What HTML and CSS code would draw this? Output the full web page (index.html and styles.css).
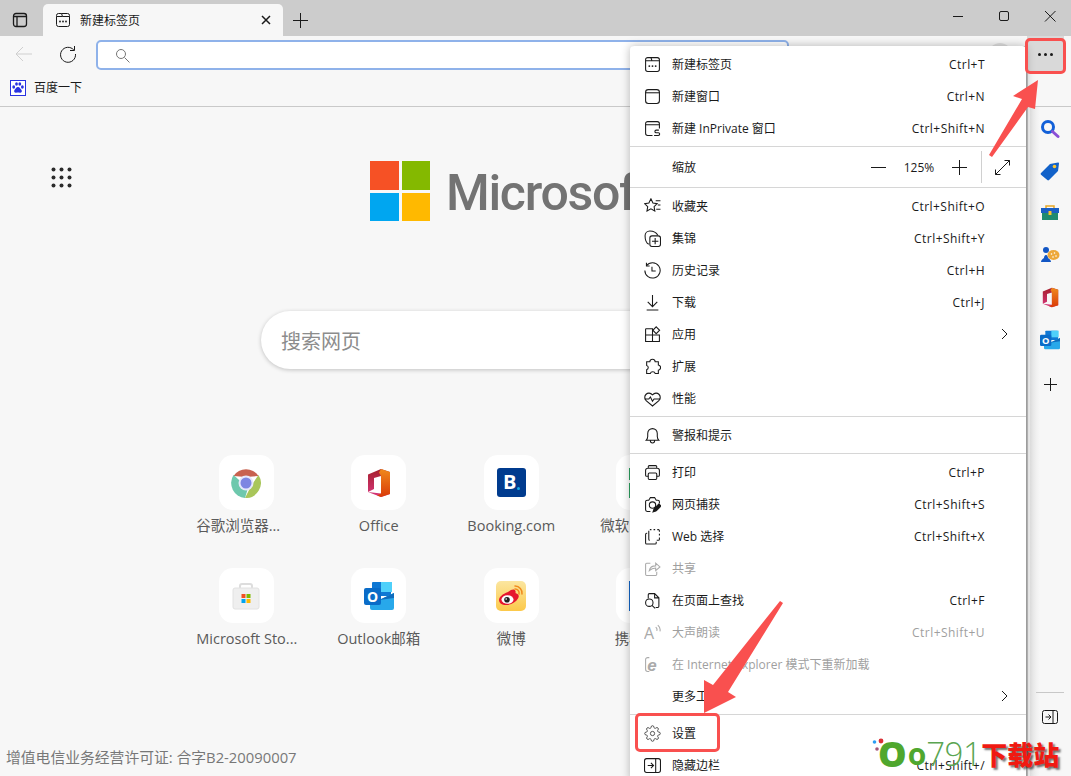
FILE: index.html
```html
<!DOCTYPE html>
<html lang="zh-CN">
<head>
<meta charset="utf-8">
<title>新建标签页</title>
<link rel="stylesheet" href="styles.css">
</head>
<body>
<svg class="defs" width="0" height="0" aria-hidden="true">
  <defs>
    <linearGradient id="offL" x1="0" y1="0" x2="0" y2="1"><stop offset="0" stop-color="#a51f2c"/><stop offset="1" stop-color="#d8387e"/></linearGradient>
    <linearGradient id="offR" x1="0" y1="0" x2="0" y2="1"><stop offset="0" stop-color="#f08a1d"/><stop offset="1" stop-color="#d93a08"/></linearGradient>
    <linearGradient id="wb" x1="0" y1="0" x2="0" y2="1"><stop offset="0" stop-color="#fbe6a0"/><stop offset="1" stop-color="#fcc94a"/></linearGradient>
    <symbol id="office" viewBox="0 0 24 30">
      <path d="M1 6.5 14 1l9 3v22l-9 3L1 24l13 1.5V8L7 10v11l-6 3z" fill="url(#offL)"/>
      <path d="M14 1l9 3v22l-9 3-4-1.5 4-2V8l-2-3.5z" fill="url(#offR)"/>
    </symbol>
    <symbol id="outlook" viewBox="0 0 30 30">
      <rect x="8" y="1" width="19" height="14" rx="1" fill="#0f78d4"/>
      <rect x="17" y="1" width="11" height="10" fill="#4fd0fa"/>
      <path d="M6 13l9 6 15-7v15a2 2 0 0 1-2 2H8a2 2 0 0 1-2-2z" fill="#28a8ea"/>
      <path d="M15 19l15-7v5z" fill="#0f6cbd"/>
      <rect x="0" y="7" width="17" height="17" rx="2" fill="#0a6cc8"/>
      <text x="8.5" y="20.5" class="svg-o">O</text>
    </symbol>
  </defs>
</svg>

<div class="browser">
  <header class="tabstrip">
    <button class="strip-btn switcher" aria-label="标签页操作">
      <svg width="16" height="16" viewBox="0 0 16 16" class="ic heavy"><rect x="1.500" y="1.500" width="13" height="13" rx="2.500"/><path d="M1.500 4.500h13M5 4.500v10"/></svg>
    </button>
    <div class="tab">
      <svg width="16" height="16" viewBox="0 0 16 16" class="ic"><path d="M1.500 4.500V3.500a2 2 0 0 1 2-2h3l1 3zM7.500 4.500h7M14.500 4.500V3.500a2 2 0 0 0-2-2h-6M1.500 4.500v8a2 2 0 0 0 2 2h9a2 2 0 0 0 2-2v-8"/><circle cx="5" cy="9.500" r=".9" class="dot"/><circle cx="8" cy="9.500" r=".9" class="dot"/><circle cx="11" cy="9.500" r=".9" class="dot"/></svg>
      <span class="tab-title">新建标签页</span>
      <svg width="10" height="10" viewBox="0 0 10 10" class="ic tab-close"><path d="M1 1l8 8M9 1l-8 8" stroke-width="1.500"/></svg>
    </div>
    <button class="strip-btn new-tab" aria-label="新建标签页">
      <svg width="15" height="15" viewBox="0 0 15 15" class="ic"><path d="M7.500 0v15M0 7.500h15"/></svg>
    </button>
    <div class="window-controls">
      <svg width="46" height="12" viewBox="0 0 46 12" class="ic"><path d="M20 6.500h10"/></svg>
      <svg width="46" height="12" viewBox="0 0 46 12" class="ic"><rect x="20.500" y="1.500" width="9" height="9" rx="1.500"/></svg>
      <svg width="46" height="12" viewBox="0 0 46 12" class="ic"><path d="M20 1l10.500 10.500M30.500 1L20 11.500"/></svg>
    </div>
  </header>

  <div class="toolbar">
    <svg width="20" height="16" viewBox="0 0 20 16" class="back"><path d="M18 8H2M9 1L2 8l7 7"/></svg>
    <svg width="18" height="18" viewBox="0 0 18 18" class="ic reload"><path d="M14.800 5A7.500 7.500 0 1 0 16.500 9"/><path d="M15.500 1v4.500H11"/></svg>
    <div class="address">
      <svg width="15" height="15" viewBox="0 0 15 15" class="addr-search"><circle cx="6" cy="6" r="4.500"/><path d="M9.500 9.500l5 5"/></svg>
    </div>
    <span class="avatar"></span>
    <button class="more-btn" aria-label="设置及其他"><i></i><i></i><i></i></button>
  </div>

  <div class="favbar">
    <svg width="16" height="16" viewBox="0 0 16 16" class="paw"><rect x=".5" y=".5" width="15" height="15" fill="#fff" stroke="#2932e1"/><ellipse cx="3.700" cy="7" rx="1.400" ry="1.800" fill="#2932e1"/><ellipse cx="6.500" cy="4" rx="1.400" ry="1.800" fill="#2932e1"/><ellipse cx="9.800" cy="4" rx="1.400" ry="1.800" fill="#2932e1"/><ellipse cx="12.400" cy="7" rx="1.400" ry="1.800" fill="#2932e1"/><path d="M8 7c-2 0-2.300 2-3.500 3-1 1.200 0 3 1.500 2.800.8-.1 1.400-.3 2-.3s1.200.2 2 .3c1.500.2 2.500-1.600 1.500-2.800C10.300 9 10 7 8 7z" fill="#2932e1"/></svg>
    <span class="fav-text">百度一下</span>
  </div>

  <div class="workspace">
    <main class="newtab">
      <svg width="21" height="21" viewBox="0 0 21 21" class="apps"><g fill="#2b2b2b"><circle cx="2.500" cy="2.500" r="2"/><circle cx="10.500" cy="2.500" r="2"/><circle cx="18.500" cy="2.500" r="2"/><circle cx="2.500" cy="10.500" r="2"/><circle cx="10.500" cy="10.500" r="2"/><circle cx="18.500" cy="10.500" r="2"/><circle cx="2.500" cy="18.500" r="2"/><circle cx="10.500" cy="18.500" r="2"/><circle cx="18.500" cy="18.500" r="2"/></g></svg>

      <div class="brand">
        <div class="ms-logo"><i class="red"></i><i class="green"></i><i class="blue"></i><i class="yellow"></i></div>
        <span class="ms-name">Microsoft</span>
      </div>

      <div class="searchbox">搜索网页</div>

      <div class="tiles">
        <a class="tile">
          <span class="tile-icon"><svg width="30" height="30" viewBox="0 0 30 30"><path d="M2.500 8a15 15 0 0 1 25 0L15 9z" fill="#c8624f"/><path d="M27.500 7A15 15 0 0 1 14 30l6-12z" fill="#a9c65a"/><path d="M2.500 7A15 15 0 0 0 14 30l3-10z" fill="#6ec8ad"/><circle cx="15" cy="15" r="7.500" fill="#e6e8fb"/><circle cx="15" cy="15" r="5.500" fill="#7d86e2"/></svg></span>
          <span class="tile-label clip">谷歌浏览器...</span>
        </a>
        <a class="tile">
          <span class="tile-icon"><svg width="24" height="30"><use href="#office"/></svg></span>
          <span class="tile-label">Office</span>
        </a>
        <a class="tile">
          <span class="tile-icon"><span class="booking">B<i></i></span></span>
          <span class="tile-label">Booking.com</span>
        </a>
        <a class="tile">
          <span class="tile-icon"><span class="ms-tile"></span></span>
          <span class="tile-label">微软中国官网</span>
        </a>
        <a class="tile">
          <span class="tile-icon"><svg width="28" height="28" viewBox="0 0 28 28"><path d="M8 8V4a2 2 0 0 1 2-2h8a2 2 0 0 1 2 2v4" fill="none" stroke="#ddd" stroke-width="2"/><rect x="1" y="6" width="26" height="21" rx="2" fill="#efefef" stroke="#e2e2e2"/><rect x="9.500" y="12" width="4" height="4" fill="#f25022"/><rect x="14.500" y="12" width="4" height="4" fill="#7fba00"/><rect x="9.500" y="17" width="4" height="4" fill="#00a4ef"/><rect x="14.500" y="17" width="4" height="4" fill="#ffb900"/></svg></span>
          <span class="tile-label clip">Microsoft Sto...</span>
        </a>
        <a class="tile">
          <span class="tile-icon"><svg width="30" height="30"><use href="#outlook"/></svg></span>
          <span class="tile-label">Outlook邮箱</span>
        </a>
        <a class="tile">
          <span class="tile-icon"><svg width="30" height="30" viewBox="0 0 30 30"><rect width="30" height="30" rx="5" fill="url(#wb)"/><path d="M12 11c4-3.500 7-3 7.500-1 .3 1-.2 2 .3 2.200 3 .7 3.700 3 2.200 5.300C20 21 15.500 24 10 24c-4 0-7-2-7-5 0-3 3.500-6 9-8z" fill="#e6162d"/><ellipse cx="11.500" cy="18.500" rx="6" ry="4.300" fill="#fff"/><circle cx="11" cy="18.700" r="2.800" fill="#222"/><circle cx="10.200" cy="18" r=".8" fill="#fff"/><path d="M19 5a7 7 0 0 1 7 8M19 8a4 4 0 0 1 4 5" fill="none" stroke="#f08a1d" stroke-width="1.500" stroke-linecap="round"/></svg></span>
          <span class="tile-label">微博</span>
        </a>
        <a class="tile">
          <span class="tile-icon"><span class="ctrip"></span></span>
          <span class="tile-label">携程旅行</span>
        </a>
      </div>

      <footer class="licence">增值电信业务经营许可证: 合字B2-20090007</footer>
    </main>

    <aside class="sidebar">
      <svg width="20" height="20" viewBox="0 0 20 20" class="side-icon first"><circle cx="8" cy="8" r="5.500" fill="none" stroke="#1260d8" stroke-width="3"/><path d="M12.500 12.500l5.500 5" stroke="#8a4fd6" stroke-width="3" stroke-linecap="round"/></svg>
      <svg width="20" height="20" viewBox="0 0 20 20" class="side-icon"><path d="M1 12l9-9 8-1.500c.7 0 1 .4 1 1L18 10l-9 9c-.5.500-1.200.500-1.700 0L1 13.700c-.5-.5-.5-1.200 0-1.700z" fill="#1262c9"/><circle cx="14.500" cy="5.500" r="1.800" fill="#fbc42f"/></svg>
      <svg width="20" height="20" viewBox="0 0 20 20" class="side-icon"><path d="M6 5V3h8v2" fill="none" stroke="#e9a825" stroke-width="1.500"/><rect x="1" y="5" width="18" height="5" fill="#1a5fc4"/><rect x="2" y="10" width="16" height="7" fill="#1f8a70"/><rect x="8.500" y="8" width="3" height="4" rx=".5" fill="#fbc42f"/></svg>
      <svg width="20" height="20" viewBox="0 0 20 20" class="side-icon"><circle cx="6" cy="5" r="3" fill="#1256c4"/><path d="M1 17c0-2 1.500-3 3-4 0-1 .5-3 2-3s2 2 2 3c1.500 1 3 2 3 4z" fill="#1256c4"/><ellipse cx="13.500" cy="10" rx="6" ry="5" fill="#eda83a"/><circle cx="11.500" cy="9" r=".8" fill="#fff"/><circle cx="14.500" cy="8" r=".8" fill="#fff"/><circle cx="16" cy="11" r=".8" fill="#fff"/><circle cx="13" cy="12" r=".8" fill="#fff"/></svg>
      <svg width="17" height="21" class="side-icon"><use href="#office"/></svg>
      <svg width="20" height="20" class="side-icon"><use href="#outlook"/></svg>
      <svg width="13" height="13" viewBox="0 0 13 13" class="ic side-plus"><path d="M6.500 0v13M0 6.500h13"/></svg>
      <hr class="side-rule">
      <svg width="16" height="14" viewBox="0 0 16 14" class="ic side-hide"><rect x=".5" y=".5" width="15" height="13" rx="2"/><path d="M11 .5v13M3.500 7h5M6.500 4.500L9 7l-2.500 2.500"/></svg>
    </aside>
  </div>

  <nav class="menu">
    <div class="row"><svg class="ic ri" viewBox="0 0 16 16"><path d="M1.500 4.500V3.500a2 2 0 0 1 2-2h3l1 3zM7.500 4.500h7M14.500 4.500V3.500a2 2 0 0 0-2-2h-6M1.500 4.500v8a2 2 0 0 0 2 2h9a2 2 0 0 0 2-2v-8"/><circle cx="5" cy="9.500" r=".9" class="dot"/><circle cx="8" cy="9.500" r=".9" class="dot"/><circle cx="11" cy="9.500" r=".9" class="dot"/></svg><span class="lbl">新建标签页</span><span class="key">Ctrl+T</span></div>
    <div class="row"><svg class="ic ri" viewBox="0 0 16 16"><rect x="1.500" y="1.500" width="13" height="13" rx="2.500"/><path d="M1.500 4.500h13"/></svg><span class="lbl">新建窗口</span><span class="key">Ctrl+N</span></div>
    <div class="row"><svg class="ic ri" viewBox="0 0 16 16"><path d="M8 14.500H3.500a2 2 0 0 1-2-2v-9a2 2 0 0 1 2-2h9a2 2 0 0 1 2 2V8M1.500 4.500h13"/><path d="M14 9.500h-2.500a1.200 1.200 0 0 0 0 2.500h2a1.200 1.200 0 0 1 0 2.500H9.500"/></svg><span class="lbl">新建 InPrivate 窗口</span><span class="key">Ctrl+Shift+N</span></div>
    <hr>
    <div class="row zoom"><span class="lbl">缩放</span>
      <svg class="ic zi" width="15" height="15" viewBox="0 0 15 15"><path d="M0 7.500h15"/></svg>
      <span class="pct">125%</span>
      <svg class="ic zi" width="15" height="15" viewBox="0 0 15 15"><path d="M7.500 0v15M0 7.500h15"/></svg>
      <span class="zsep"></span>
      <svg class="ic zi" width="15" height="15" viewBox="0 0 15 15"><path d="M9.500.5h5v5M14.500.5l-14 14M.5 9.500v5h5"/></svg>
    </div>
    <hr>
    <div class="row"><svg class="ic ri" viewBox="0 0 16 16"><path d="M6.500 .8l1.900 3.900 4 .6-2.900 2.900.7 4-3.700-2-3.700 2 .7-4L.6 5.300l4-.6z"/><path d="M11 2.500h4.500M13 6.500h2.500M11.500 10.500h4"/></svg><span class="lbl">收藏夹</span><span class="key">Ctrl+Shift+O</span></div>
    <div class="row"><svg class="ic ri" viewBox="0 0 16 16"><path d="M4.500 13.500C2.500 12.500 1 9 1 5.500 1 3 3 1 5.500 1c2.500 0 6 1.200 7.500 4"/><rect x="5.500" y="5.500" width="10" height="10" rx="2"/><path d="M10.500 7.500v6M7.500 10.500h6"/></svg><span class="lbl">集锦</span><span class="key">Ctrl+Shift+Y</span></div>
    <div class="row"><svg class="ic ri" viewBox="0 0 16 16"><path d="M2.300 3.500A7.200 7.200 0 1 1 .8 8"/><path d="M2.300 .8v3h3M7.500 4.500v4h3.500"/></svg><span class="lbl">历史记录</span><span class="key">Ctrl+H</span></div>
    <div class="row"><svg class="ic ri" viewBox="0 0 16 16"><path d="M8 1v10.500M3.500 7.500L8 12l4.500-4.500M2.500 15h11"/></svg><span class="lbl">下载</span><span class="key">Ctrl+J</span></div>
    <div class="row arrowed"><svg class="ic ri" viewBox="0 0 16 16"><path d="M8 2.500H2a.5.5 0 0 0-.5.500v11.500h13V8.500H8zM1.500 8.500H8v6"/><path d="M11.500 .8l3.200 3.200-3.200 3.200L8.300 4z"/></svg><span class="lbl">应用</span><svg class="ic chev" width="7" height="12" viewBox="0 0 7 12"><path d="M1 1l5 5-5 5"/></svg></div>
    <div class="row"><svg class="ic ri" viewBox="0 0 16 16"><path d="M5.500 3.500c.3-3 4.700-3 5 0h3v3c2.800.3 2.800 4.700 0 5v3h-3c-.5-2-4-2-4.500 0H2.500v-3.500c2-.5 2-3.500 0-4v-3.500z"/></svg><span class="lbl">扩展</span></div>
    <div class="row"><svg class="ic ri" viewBox="0 0 16 16"><path d="M2 10C.5 8 .5 5.500 2 4s4-1.500 6 .5c2-2 4.500-2 6 -.5s1.500 4 0 6l-6 5z"/><path d="M.5 8.500h4l1.500-2 2 4 1.500-2h6"/></svg><span class="lbl">性能</span></div>
    <hr>
    <div class="row"><svg class="ic ri" viewBox="0 0 16 16"><path d="M2 12.500h12c-1-1-1.500-2-1.500-3.500V6a4.500 4.500 0 0 0-9 0v3c0 1.500-.5 2.500-1.500 3.500zM6 13a2 2 0 0 0 4 0"/></svg><span class="lbl">警报和提示</span></div>
    <hr>
    <div class="row"><svg class="ic ri" viewBox="0 0 16 16"><path d="M4 4V2.500a1 1 0 0 1 1-1h6a1 1 0 0 1 1 1V4M4 11.500H2.500a1 1 0 0 1-1-1V6a2 2 0 0 1 2-2h9a2 2 0 0 1 2 2v4.500a1 1 0 0 1-1 1H12"/><rect x="4" y="8.500" width="8" height="6" rx="1"/></svg><span class="lbl">打印</span><span class="key">Ctrl+P</span></div>
    <div class="row"><svg class="ic ri" viewBox="0 0 16 16"><path d="M6 14.500H3a1.500 1.500 0 0 1-1.500-1.500V5.500A1.500 1.500 0 0 1 3 4h1.500L6 1.500h4L11.500 4H13a1.500 1.500 0 0 1 1.500 1.500V7"/><circle cx="8" cy="8.500" r="3"/><path d="M8.500 15l1-3 4.500-4.500 2 2-4.500 4.500z" fill="#1a1a1a"/></svg><span class="lbl">网页捕获</span><span class="key">Ctrl+Shift+S</span></div>
    <div class="row"><svg class="ic ri" viewBox="0 0 16 16"><path d="M5.500 1.500h1.500M9 1.500h1.500M12.500 1.500h1a1.500 1.500 0 0 1 1 1v1M14.500 5.500V7M14.500 9v1.500a1 1 0 0 1-1 1H12M5.500 11.500a1 1 0 0 1-1-1V2.500"/><path d="M3 5H2.500a1 1 0 0 0-1 1v8a1 1 0 0 0 1 1h8a1 1 0 0 0 1-1v-1"/></svg><span class="lbl">Web 选择</span><span class="key">Ctrl+Shift+X</span></div>
    <div class="row off"><svg class="ic ri" viewBox="0 0 16 16"><path d="M6 3H2.500a1 1 0 0 0-1 1v9.500a1 1 0 0 0 1 1H11a1 1 0 0 0 1-1V11"/><path d="M5 10c.5-3 3-4.500 6-4.500V3l4 3.500-4 3.500V7.500c-2.500 0-4.500 1-6 2.500z"/></svg><span class="lbl">共享</span></div>
    <div class="row"><svg class="ic ri" viewBox="0 0 16 16"><path d="M4 6V2.500a1 1 0 0 1 1-1h5l4 4v8a1 1 0 0 1-1 1h-2M10 1.500v4h4"/><circle cx="5" cy="10" r="3.500"/><path d="M7.500 12.500l3 3"/></svg><span class="lbl">在页面上查找</span><span class="key">Ctrl+F</span></div>
    <div class="row off"><svg class="ri" viewBox="0 0 16 16"><text x="0" y="14" class="svg-a">A</text><path d="M11 3a3 3 0 0 1 1 3.500M13 1a6 6 0 0 1 2 6" fill="none" stroke="#aaa"/></svg><span class="lbl">大声朗读</span><span class="key">Ctrl+Shift+U</span></div>
    <div class="row off"><svg class="ri" viewBox="0 0 16 16"><path d="M5 1.500H3.500a2 2 0 0 0-2 2v9a2 2 0 0 0 2 2H5" fill="none" stroke="#aaa"/><text x="3" y="14" class="svg-e">e</text></svg><span class="lbl">在 Internet Explorer 模式下重新加载</span></div>
    <div class="row arrowed"><span class="ri"></span><span class="lbl">更多工具</span><svg class="ic chev" width="7" height="12" viewBox="0 0 7 12"><path d="M1 1l5 5-5 5"/></svg></div>
    <hr>
    <div class="row"><svg class="ic ri" viewBox="0 0 24 24" stroke-width="1.700"><circle cx="12" cy="12" r="3"/><path d="M19.400 15a1.650 1.650 0 0 0 .33 1.820l.06.06a2 2 0 0 1 0 2.830 2 2 0 0 1-2.830 0l-.06-.06a1.650 1.650 0 0 0-1.820-.33 1.650 1.650 0 0 0-1 1.510V21a2 2 0 0 1-2 2 2 2 0 0 1-2-2v-.09A1.650 1.650 0 0 0 9 19.400a1.650 1.650 0 0 0-1.820.33l-.06.06a2 2 0 0 1-2.830 0 2 2 0 0 1 0-2.830l.06-.06a1.650 1.650 0 0 0 .33-1.820 1.650 1.650 0 0 0-1.510-1H3a2 2 0 0 1-2-2 2 2 0 0 1 2-2h.09A1.650 1.650 0 0 0 4.600 9a1.650 1.650 0 0 0-.33-1.820l-.06-.06a2 2 0 0 1 0-2.830 2 2 0 0 1 2.830 0l.06.06a1.650 1.650 0 0 0 1.820.33H9a1.650 1.650 0 0 0 1-1.510V3a2 2 0 0 1 2-2 2 2 0 0 1 2 2v.09a1.650 1.650 0 0 0 1 1.510 1.650 1.650 0 0 0 1.820-.33l.06-.06a2 2 0 0 1 2.830 0 2 2 0 0 1 0 2.830l-.06.06a1.650 1.650 0 0 0-.33 1.820V9a1.650 1.650 0 0 0 1.510 1H21a2 2 0 0 1 2 2 2 2 0 0 1-2 2h-.09a1.650 1.650 0 0 0-1.510 1z"/></svg><span class="lbl">设置</span></div>
    <div class="row"><svg class="ic ri" viewBox="0 0 16 16"><rect x=".5" y="1.500" width="15" height="13" rx="2"/><path d="M11 1.500v13M3.500 8h5M6.500 5.500L9 8l-2.500 2.500"/></svg><span class="lbl">隐藏边栏</span><span class="key">Ctrl+Shift+/</span></div>
  </nav>

  <span class="mark-more"></span>
  <span class="mark-settings"></span>
  <svg class="arrows" width="1071" height="776" viewBox="0 0 1071 776">
    <path d="M1038 80 1013 96l9 3-33 56 3 2 36-50 7 2z" fill="#f9504f"/>
    <path d="M783 603l-3-2-67 84-9-5v33l32-16-8-5z" fill="#f9504f"/>
  </svg>

  <div class="watermark">
    <svg class="wm-dots" width="14" height="16" viewBox="0 0 14 16"><circle cx="2.500" cy="4" r="1.800" fill="#2a9df4"/><circle cx="9" cy="3" r="2.400" fill="#d93036"/><circle cx="5" cy="11" r="1.800" fill="#a4567a"/></svg>
    <span class="wm-o">O</span><span class="wm-o small">o</span><span class="wm-num">791</span><span class="wm-cn">下载站</span>
  </div>
</div>
</body>
</html>
```
FILE: styles.css
```css
* { box-sizing: border-box; }
html, body { margin: 0; height: 100%; overflow: hidden; }
body { font-family: "Open Sans", "Noto Sans CJK SC", sans-serif; font-size: 12px; color: #1a1a1a; background: #f7f7f7; }
button { border: 0; background: none; padding: 0; }
.defs { position: absolute; }
.ic { fill: none; stroke: #1a1a1a; stroke-width: 1; }
.ic.heavy { stroke-width: 1.300; }
.ic .dot { fill: #1a1a1a; stroke: none; }
.svg-o { font: 700 14px "Open Sans", sans-serif; fill: #fff; text-anchor: middle; }
.svg-a { font: 400 15px "Open Sans", sans-serif; fill: #aaa; }
.svg-e { font: italic 700 16px "Liberation Sans", sans-serif; fill: #aaa; }

.browser { position: relative; width: 1071px; height: 776px; overflow: hidden; display: flex; flex-direction: column; }

/* Tab strip */
.tabstrip { height: 36px; flex: none; background: #cccccc; display: flex; align-items: flex-end; }
.strip-btn { display: flex; align-items: center; justify-content: center; }
.switcher { width: 43px; height: 32px; padding-right: 4px; }
.tab { width: 240px; height: 32px; background: #f7f7f7; border-radius: 5px 5px 0 0; display: flex; align-items: center; padding: 0 12px; }
.tab-title { margin-left: 9px; flex: 1; font-size: 12px; color: #1a1a1a; }
.new-tab { width: 34px; height: 32px; }
.window-controls { margin-left: auto; align-self: flex-start; padding-top: 10px; display: flex; }
.window-controls svg { display: block; }

/* Toolbar */
.toolbar { height: 36px; flex: none; background: #f7f7f7; display: flex; align-items: center; padding: 0 7px 0 0; position: relative; }
.back { margin-left: 14px; fill: none; stroke: #cfcfcf; stroke-width: 1; }
.reload { margin-left: 25px; }
.address { width: 693px; height: 30px; margin-left: 19px; margin-top: 2px; background: #fff; border: 2px solid #8fb2ea; border-radius: 5px; display: flex; align-items: center; padding-left: 17px; }
.addr-search { fill: none; stroke: #767676; stroke-width: 1; }
.avatar { width: 24px; height: 24px; border-radius: 50%; background: #dedede; margin-left: 199px; margin-top: 2px; }
.more-btn { width: 37px; height: 36px; margin-left: auto; background: #d9d9d9; display: flex; align-items: center; justify-content: center; gap: 3px; }
.more-btn i { width: 3px; height: 3px; background: #1a1a1a; border-radius: 50%; }

/* Favourites */
.favbar { height: 35px; flex: none; background: #f7f7f7; border-bottom: 1px solid #c9c9c9; display: flex; align-items: center; padding: 0 0 3px 10px; gap: 8px; }
.paw { display: block; }
.fav-text { margin-bottom: 2px; }

/* Work area */
.workspace { flex: 1; display: flex; min-height: 0; }
.newtab { position: relative; width: 1030px; flex: none; background: #f7f7f7; display: flex; flex-direction: column; align-items: center; padding-top: 54px; }
.apps { position: absolute; left: 51px; top: 60px; }
.brand { display: flex; align-items: center; gap: 16px; height: 60px; width: 290px; white-space: nowrap; }
.ms-logo { width: 60px; height: 60px; flex: none; display: grid; grid-template-columns: 28.500px 28.500px; grid-template-rows: 28.500px 28.500px; gap: 3px; }
.ms-logo i { display: block; }
.red { background: #f65125; }
.green { background: #84b900; }
.blue { background: #00a6f0; }
.yellow { background: #ffb900; }
.ms-name { font-family: Roboto, "Open Sans", sans-serif; font-size: 50px; font-weight: 500; color: #737373; letter-spacing: -1.300px; line-height: 60px; margin-top: 4px; }
.searchbox { width: 508px; height: 58px; margin-top: 90px; background: #fff; border-radius: 29px; box-shadow: 0 1px 4px rgba(0, 0, 0, .22); padding-left: 20px; line-height: 62px; font-size: 20px; color: #8c8c8c; }
.tiles { align-self: flex-start; margin: 86px 0 0 180px; display: grid; grid-template-columns: repeat(4, 132.500px); grid-auto-rows: 113px; }
.tile { display: flex; flex-direction: column; align-items: center; }
.tile-icon { width: 55px; height: 55px; border-radius: 14px; background: #fff; display: flex; align-items: center; justify-content: center; }
.tile-label { margin-top: 6px; font-size: 14.500px; line-height: 20px; color: #5a5a5a; white-space: nowrap; }
.clip { width: 100px; }
.booking { position: relative; width: 29px; height: 29px; border-radius: 3px; background: #003b8e; color: #fff; font-weight: 700; font-size: 20px; line-height: 28px; text-align: center; padding-right: 3px; }
.booking i { position: absolute; right: 6px; bottom: 7px; width: 3px; height: 3px; border-radius: 50%; background: #16a9e8; }
.ms-tile { width: 30px; height: 30px; background: linear-gradient(#2ca25f 0 40%, #f7f7f7 40% 50%, #2ca25f 50%); }
.ctrip { width: 30px; height: 30px; background: #1366c9; }
.licence { position: absolute; left: 6px; top: 640px; font-size: 14.800px; line-height: 20px; color: #777; white-space: nowrap; }

/* Sidebar */
.sidebar { width: 41px; flex: none; background: linear-gradient(90deg, #e6e6e6, #f7f7f7 10px); display: flex; flex-direction: column; align-items: center; padding: 12px 1px 0 0; position: relative; }
.side-icon { margin-bottom: 22px; display: block; flex: none; }
.side-plus { margin-top: 6px; flex: none; }
.side-rule { width: 28px; margin: 301px 0 0; border: 0; border-top: 1px solid #c8c8c8; }
.side-hide { margin-top: 17px; flex: none; }

/* Menu */
.menu { position: absolute; left: 630px; top: 46px; width: 396px; padding-top: 2px; background: #fff; border-radius: 4px 4px 0 0; box-shadow: 0 0 10px rgba(0, 0, 0, .28), 1px 0 0 #b4b4b4, 2px 0 0 #c4c4c4; }
.menu hr { margin: 2px 0; border: 0; border-top: 1px solid #d6d6d6; }
.row { height: 32px; display: flex; align-items: center; padding: 0 41px 0 14px; color: #1a1a1a; white-space: nowrap; }
.ri { width: 17px; height: 17px; flex: none; margin-right: 11px; display: block; }
.lbl { flex: 1; font-size: 12px; }
.key { font-size: 12px; letter-spacing: .45px; }
.off { color: #9f9f9f; }
.off .ic { stroke: #aaa; }
.arrowed { padding-right: 18px; }
.zoom { height: 36px; padding: 0 16px 0 42px; }
.zoom .lbl { flex: none; width: 199px; }
.pct { width: 67px; text-align: center; font-size: 12px; }
.zi { flex: none; display: block; }
.zsep { width: 1px; height: 32px; background: #d0d0d0; margin: 0 13px 0 14px; }

/* Annotations */
.mark-more { position: absolute; left: 1025px; top: 38px; width: 41px; height: 36px; border: 3px solid #f9504f; border-radius: 5px; }
.mark-settings { position: absolute; left: 635px; top: 713px; width: 85px; height: 39px; border: 3px solid #f9504f; border-radius: 5px; }
.arrows { position: absolute; left: 0; top: 0; pointer-events: none; }

/* Watermark */
.watermark { position: absolute; left: 872px; top: 732px; height: 44px; display: flex; align-items: center; white-space: nowrap; }
.wm-dots { align-self: flex-start; margin: 6px -8px 0 0; flex: none; position: relative; z-index: 1; }
.wm-o { font-size: 36px; font-weight: 800; color: #4fa72e; line-height: 44px; }
.wm-o.small { font-size: 30px; font-weight: 700; margin-left: 1px; }
.wm-num { font-size: 33px; font-weight: 300; letter-spacing: -.5px; color: #5aa552; line-height: 44px; }
.wm-cn { font-family: "Noto Sans CJK SC", sans-serif; font-size: 26px; font-weight: 900; color: #f01a12; line-height: 44px; text-shadow: 2px 2px 2px rgba(0, 0, 0, .55); }
```
